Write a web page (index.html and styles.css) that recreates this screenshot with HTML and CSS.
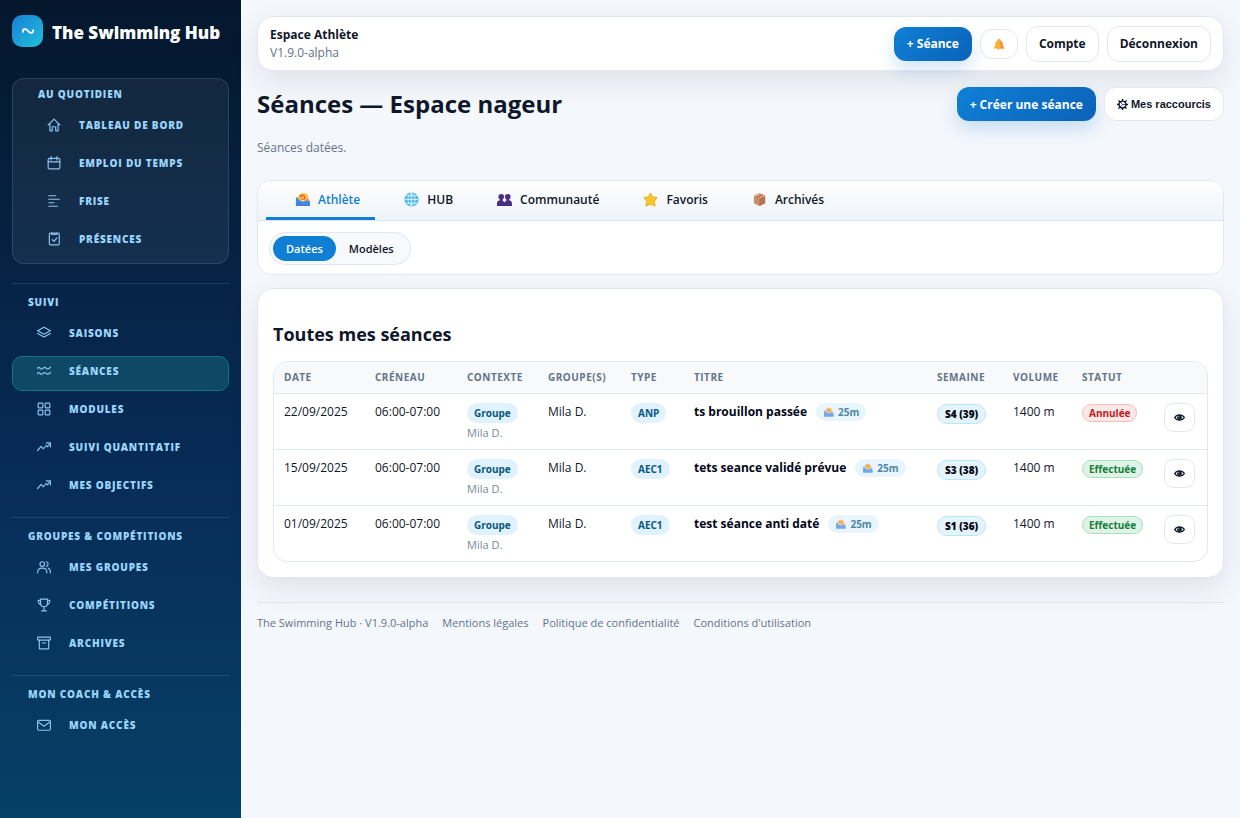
FILE: index.html
```html
<!DOCTYPE html>
<html lang="fr">
<head>
  <meta charset="UTF-8">
  <meta name="viewport" content="width=device-width, initial-scale=1.0">
  <title>Séances — The Swimming Hub</title>
  <link rel="stylesheet" href="styles.css">
</head>
<body>
  <svg class="sprite" aria-hidden="true">
    <symbol id="i-swim" viewBox="0 0 16 16">
      <path d="M3 9C2 4 5 1 9 1c4 0 6 3 5 8z" fill="#fbc02d"/>
      <path d="M5 4c2-2 6-1 6 2 0 2-2 3-4 2z" fill="#e8505b"/>
      <circle cx="8" cy="6" r="1.500" fill="#ffcc4d"/>
      <path d="M9 8l4-2 3 3-5 3z" fill="#f7a845"/>
      <path d="M1 6c1-1 2 1 3 2s3 2 5 2 3-1 4-1 2 1 3 1v5H1z" fill="#3b8ee8"/>
      <path d="M1 12c3-1 4 1 7 1s4-1 8-1v3H1z" fill="#4a7fe0"/>
    </symbol>
    <symbol id="i-trend" viewBox="0 0 24 24">
      <path d="M1 18l6-7 4 4 5-6 2 3 5-7M16 5h7v7"/>
    </symbol>
    <symbol id="i-eye" viewBox="0 0 16 12">
      <path d="M1 6c3-5 11-5 14 0-3 5-11 5-14 0z" fill="none" stroke="#0f172a" stroke-width="2"/>
      <circle cx="8" cy="6" r="3.500" fill="#0f172a"/>
      <circle cx="7" cy="5" r="0.800" fill="#fff"/>
    </symbol>
  </svg>

  <div class="layout">
    <aside class="sidebar">
      <div class="brand">
        <span class="brand-logo">
          <svg viewBox="0 0 16 10"><path d="M2 6c0-4 4-4 6-1s6 3 6-1"/></svg>
        </span>
        <span class="brand-name">The Swimming Hub</span>
      </div>

      <nav>
        <section class="nav-group nav-card">
          <h2>Au quotidien</h2>
          <a href="#"><svg viewBox="0 0 24 24"><path d="M2 12L12 2l10 10M5 10v12h4v-7h6v7h4V10"/></svg>Tableau de bord</a>
          <a href="#"><svg viewBox="0 0 24 24"><rect x="2" y="4" width="20" height="18" rx="2"/><path d="M7 1v6M17 1v6M2 10h20"/></svg>Emploi du temps</a>
          <a href="#"><svg viewBox="0 0 24 24"><path d="M3 3h12M3 9h18M3 15h9M3 21h15"/></svg>Frise</a>
          <a href="#"><svg viewBox="0 0 24 24"><rect x="4" y="2" width="17" height="20" rx="2"/><path d="M8 2v2h9V2M9 13l3 3 5-6"/></svg>Présences</a>
        </section>

        <section class="nav-group">
          <h2>Suivi</h2>
          <a href="#"><svg viewBox="0 0 24 24"><path d="M12 2L1 8l11 6 11-6zM1 13l11 6 11-6"/></svg>Saisons</a>
          <a href="#" class="active"><svg viewBox="0 0 24 24"><path d="M0 8c3-4 4-2 6 0s4-1 6-2 3 1 5 2 4 0 7-3M0 17c3-4 4-2 6 0s4-1 6-2 3 1 5 2 4 0 7-3"/></svg>Séances</a>
          <a href="#"><svg viewBox="0 0 24 24"><rect x="2" y="2" width="8" height="8" rx="1"/><rect x="14" y="2" width="8" height="8" rx="1"/><rect x="2" y="14" width="8" height="8" rx="1"/><rect x="14" y="14" width="8" height="8" rx="1"/></svg>Modules</a>
          <a href="#"><svg><use href="#i-trend"/></svg>Suivi quantitatif</a>
          <a href="#"><svg><use href="#i-trend"/></svg>Mes objectifs</a>
        </section>

        <section class="nav-group">
          <h2>Groupes &amp; compétitions</h2>
          <a href="#"><svg viewBox="0 0 24 24"><circle cx="9" cy="7" r="4"/><path d="M1 22c0-6 3-8 8-8s8 2 8 8M16 3c4 1 4 7 0 8M19 14c3 1 4 4 4 8"/></svg>Mes groupes</a>
          <a href="#"><svg viewBox="0 0 24 24"><path d="M6 2h12v7c0 8-12 8-12 0zM6 4H2c0 5 1 7 5 7M18 4h4c0 5-1 7-5 7M12 15v7M8 22h8"/></svg>Compétitions</a>
          <a href="#"><svg viewBox="0 0 24 24"><rect x="1" y="2" width="22" height="5" rx="1"/><path d="M4 7v15h16V7M9 12h6"/></svg>Archives</a>
        </section>

        <section class="nav-group">
          <h2>Mon coach &amp; accès</h2>
          <a href="#"><svg viewBox="0 0 24 24"><rect x="1" y="4" width="22" height="17" rx="2"/><path d="M2 7l10 7 10-7"/></svg>Mon accès</a>
        </section>
      </nav>
    </aside>

    <main class="main">
      <header class="topbar">
        <div class="topbar-title">
          <strong>Espace Athlète</strong>
          <span>V1.9.0-alpha</span>
        </div>
        <div class="actions">
          <button class="btn btn-primary">+ Séance</button>
          <button class="btn btn-bell" aria-label="Notifications">
            <svg viewBox="0 0 16 16"><path d="M8 1c1 0 2 1 2 2 3 2 3 5 3 8l2 2v1H1v-1l2-2c0-3 0-6 3-8 0-1 1-2 2-2z" fill="#fbb034"/><path d="M10 3c3 2 3 5 3 8l2 2v1h-5z" fill="#f58b3c"/><circle cx="7" cy="14" r="1.500" fill="#f7a531"/></svg>
          </button>
          <button class="btn">Compte</button>
          <button class="btn">Déconnexion</button>
        </div>
      </header>

      <div class="page-head">
        <h1>Séances — Espace nageur</h1>
        <div class="actions">
          <button class="btn btn-primary">+ Créer une séance</button>
          <button class="btn btn-shortcuts"><svg viewBox="0 0 16 16"><circle cx="8" cy="8" r="5"/><path d="M8 8h5M8 8L5 4M8 8l-3 4" stroke-width="1"/><path d="M8 0v3M8 13v3M0 8h3M13 8h3M2 2l3 3M11 11l3 3M2 14l3-3M11 5l3-3"/></svg>Mes raccourcis</button>
        </div>
      </div>
      <p class="subtitle">Séances datées.</p>

      <section class="tabs-card">
        <div class="tabs">
          <button class="tab active"><svg><use href="#i-swim"/></svg>Athlète</button>
          <button class="tab"><svg viewBox="0 0 16 16"><circle cx="8" cy="8" r="7.500" fill="#4fb8ee"/><path d="M8 1v14M1 8h14M2 4h12M2 12h12M8 1c-5 4-5 10 0 14M8 1c5 4 5 10 0 14" fill="none" stroke="#d5effc"/></svg>HUB</button>
          <button class="tab"><svg viewBox="0 0 16 16"><g fill="#4b2e83"><circle cx="4.500" cy="5" r="3"/><circle cx="11.500" cy="5" r="3"/><path d="M3 7h3v3H3zM10 7h3v3h-3zM0 15c0-4 0-5 2-6h4l2 2 2-2h4c2 1 2 2 2 6z"/></g></svg>Communauté</button>
          <button class="tab"><svg viewBox="0 0 16 16"><path d="M8 1l2 4 5 1-3 4 1 5-5-2-5 2 1-5-3-4 5-1z" fill="#fcc52c" stroke="#e5ad22" stroke-linejoin="round"/></svg>Favoris</button>
          <button class="tab"><svg viewBox="0 0 16 16"><path d="M8 1l6 3v8l-6 3-6-3V4z" fill="#c98d68"/><path d="M8 7l6-3v8l-6 3z" fill="#b47250"/><path d="M2 4l6-3 6 3-6 3z" fill="#dfa884"/><path d="M5 6l6-3" fill="none" stroke="#7d4934"/></svg>Archivés</button>
        </div>
        <div class="tabs-body">
          <div class="segment">
            <button class="active">Datées</button>
            <button>Modèles</button>
          </div>
        </div>
      </section>

      <section class="card">
        <h2>Toutes mes séances</h2>
        <div class="table-wrap">
          <table>
            <colgroup>
              <col class="c-date"><col class="c-slot"><col class="c-context"><col class="c-group"><col class="c-type">
              <col><col class="c-week"><col class="c-volume"><col class="c-status"><col class="c-action">
            </colgroup>
            <thead>
              <tr>
                <th>Date</th><th>Créneau</th><th>Contexte</th><th>Groupe(s)</th><th>Type</th>
                <th>Titre</th><th>Semaine</th><th>Volume</th><th>Statut</th><th></th>
              </tr>
            </thead>
            <tbody>
              <tr>
                <td>22/09/2025</td>
                <td>06:00-07:00</td>
                <td><span class="pill">Groupe</span><small>Mila D.</small></td>
                <td>Mila D.</td>
                <td><span class="pill">ANP</span></td>
                <td><strong>ts brouillon passée</strong><span class="pool"><svg><use href="#i-swim"/></svg>25m</span></td>
                <td><span class="week">S4 (39)</span></td>
                <td>1400 m</td>
                <td><span class="status cancelled">Annulée</span></td>
                <td><button class="view" aria-label="Voir"><svg><use href="#i-eye"/></svg></button></td>
              </tr>
              <tr>
                <td>15/09/2025</td>
                <td>06:00-07:00</td>
                <td><span class="pill">Groupe</span><small>Mila D.</small></td>
                <td>Mila D.</td>
                <td><span class="pill">AEC1</span></td>
                <td><strong>tets seance validé prévue</strong><span class="pool"><svg><use href="#i-swim"/></svg>25m</span></td>
                <td><span class="week">S3 (38)</span></td>
                <td>1400 m</td>
                <td><span class="status done">Effectuée</span></td>
                <td><button class="view" aria-label="Voir"><svg><use href="#i-eye"/></svg></button></td>
              </tr>
              <tr>
                <td>01/09/2025</td>
                <td>06:00-07:00</td>
                <td><span class="pill">Groupe</span><small>Mila D.</small></td>
                <td>Mila D.</td>
                <td><span class="pill">AEC1</span></td>
                <td><strong>test séance anti daté</strong><span class="pool"><svg><use href="#i-swim"/></svg>25m</span></td>
                <td><span class="week">S1 (36)</span></td>
                <td>1400 m</td>
                <td><span class="status done">Effectuée</span></td>
                <td><button class="view" aria-label="Voir"><svg><use href="#i-eye"/></svg></button></td>
              </tr>
            </tbody>
          </table>
        </div>
      </section>

      <footer class="footer">
        <span>The Swimming Hub · V1.9.0-alpha</span>
        <a href="#">Mentions légales</a>
        <a href="#">Politique de confidentialité</a>
        <a href="#">Conditions d'utilisation</a>
      </footer>
    </main>
  </div>
</body>
</html>
```
FILE: styles.css
```css
* {
  box-sizing: border-box;
}
body {
  margin: 0;
  font-family: "Open Sans", "Noto Sans", sans-serif;
  font-size: 12px;
  color: #0f172a;
  background: #f4f7fc;
}
h1, h2, p {
  margin: 0;
}
button {
  font-family: inherit;
  color: inherit;
  cursor: pointer;
}
a {
  color: inherit;
  text-decoration: none;
}
.sprite {
  display: none;
}
.layout {
  display: flex;
  min-height: 100vh;
}

/* Sidebar */
.sidebar {
  width: 241px;
  flex-shrink: 0;
  padding: 15px 12px;
  color: #9bd5fb;
  background: linear-gradient(180deg, #04172d 0%, #072c57 58%, #064066 100%);
}
.brand {
  display: flex;
  align-items: flex-end;
  gap: 9px;
  margin-bottom: 31px;
}
.brand-logo {
  display: flex;
  align-items: center;
  justify-content: center;
  width: 31px;
  height: 32px;
  border-radius: 10px;
  background: linear-gradient(135deg, #1680d8, #22bfd8);
}
.brand-logo svg {
  width: 14px;
  height: 10px;
  fill: none;
  stroke: #fff;
  stroke-width: 2;
  stroke-linecap: round;
}
.brand-name {
  font-size: 17px;
  line-height: 28px;
  font-weight: 800;
  color: #fff;
}
.nav-group {
  border-top: 1px solid rgba(148, 190, 230, 0.18);
  padding-top: 10px;
  margin-bottom: 12px;
}
.nav-card {
  padding: 7px 0 4px 9px;
  margin-bottom: 19px;
  border: 1px solid rgba(148, 190, 230, 0.18);
  border-radius: 12px;
  background: rgba(255, 255, 255, 0.06);
}
.nav-group h2 {
  padding-left: 16px;
  margin-bottom: 8px;
  font-size: 10px;
  line-height: 16px;
  font-weight: 800;
  letter-spacing: 0.08em;
  text-transform: uppercase;
}
.nav-group a {
  display: flex;
  align-items: center;
  gap: 18px;
  padding: 5px 0 10px 24px;
  margin-bottom: 3px;
  border: 1px solid transparent;
  border-radius: 10px;
  font-size: 10px;
  line-height: 18px;
  font-weight: 800;
  letter-spacing: 0.08em;
  text-transform: uppercase;
}
.nav-group a:last-child {
  margin-bottom: 0;
}
.nav-group a.active {
  background: #0f4866;
  border-color: #137287;
}
.nav-group svg {
  width: 14px;
  height: 14px;
  fill: none;
  stroke: #8fc2ee;
  stroke-width: 2;
  stroke-linecap: round;
  stroke-linejoin: round;
}

/* Header */
.main {
  flex: 1;
  min-width: 0;
  padding: 16px;
}
.topbar {
  display: flex;
  align-items: center;
  justify-content: space-between;
  padding: 8px 12px;
  border: 1px solid #e2e8f3;
  border-radius: 16px;
  background: #fff;
  box-shadow: 0 10px 30px rgba(15, 23, 42, 0.09);
}
.topbar-title {
  display: flex;
  flex-direction: column;
  padding-top: 1px;
  font-size: 12px;
  line-height: 18px;
}
.topbar-title span,
.subtitle {
  color: #64748b;
}
.actions {
  display: flex;
  align-items: center;
  gap: 8px;
}
.btn {
  height: 36px;
  padding: 0 12px;
  border: 1px solid #e2e8f0;
  border-radius: 12px;
  background: #fff;
  font-size: 12px;
  font-weight: 700;
}
.btn-primary {
  height: 34px;
  padding: 0 13px;
  border: none;
  color: #fff;
  background: linear-gradient(135deg, #0f80d5, #0a62b8);
  box-shadow: 0 8px 18px rgba(14, 120, 210, 0.2);
}
.btn-bell {
  display: flex;
  align-items: center;
  height: 30px;
}
.btn-bell svg {
  width: 12px;
  height: 14px;
}
.btn-shortcuts {
  display: flex;
  align-items: center;
  gap: 3px;
  height: 34px;
  font-family: "Liberation Sans", Arial, sans-serif;
  font-size: 11px;
}
.btn-shortcuts svg {
  width: 11px;
  height: 11px;
  fill: none;
  stroke: #0f172a;
  stroke-width: 2;
}
.page-head {
  display: flex;
  align-items: center;
  justify-content: space-between;
  margin-top: 16px;
}
.page-head h1 {
  font-size: 24px;
  line-height: 34px;
}
.subtitle {
  margin: 18px 0 23px;
  line-height: 18px;
}

/* Tabs */
.tabs-card {
  margin-bottom: 13px;
  border: 1px solid #e2e8f3;
  border-radius: 14px;
  background: #fff;
  overflow: hidden;
}
.tabs {
  display: flex;
  padding: 0 8px;
  border-bottom: 1px solid #dfe7f2;
  background: linear-gradient(180deg, #fff, #edf4fa);
}
.tab {
  display: flex;
  align-items: center;
  gap: 8px;
  height: 39px;
  padding: 1px 15px 0 29px;
  border: none;
  border-bottom: 3px solid transparent;
  background: none;
  font-size: 12px;
  font-weight: 600;
}
.tab.active {
  color: #0f7fd4;
  border-bottom-color: #0f7fd4;
}
.tab svg {
  width: 15px;
  height: 15px;
}
.tabs-body {
  padding: 11px 11px 9px;
}
.segment {
  display: inline-flex;
  padding: 3px;
  border: 1px solid #e2e8f0;
  border-radius: 16px;
  background: #f7f9fb;
  vertical-align: top;
}
.segment button {
  height: 25px;
  padding: 0 13px;
  border: none;
  border-radius: 13px;
  background: none;
  font-size: 11px;
  font-weight: 600;
}
.segment .active {
  color: #fff;
  background: #0f7fd4;
}

/* Sessions table */
.card {
  padding: 31px 15px 15px;
  border: 1px solid #e2e8f3;
  border-radius: 16px;
  background: #fff;
  box-shadow: 0 10px 30px rgba(15, 23, 42, 0.09);
}
.card h2 {
  margin-bottom: 13px;
  font-size: 18px;
  line-height: 28px;
}
.table-wrap {
  border: 1px solid #e2e8f3;
  border-radius: 14px;
  overflow: hidden;
}
table {
  width: 100%;
  table-layout: fixed;
  border-collapse: collapse;
}
.c-date {
  width: 91px;
}
.c-slot {
  width: 92px;
}
.c-context {
  width: 81px;
}
.c-group {
  width: 83px;
}
.c-type {
  width: 63px;
}
.c-week {
  width: 76px;
}
.c-volume {
  width: 69px;
}
.c-status {
  width: 82px;
}
.c-action {
  width: 53px;
}
th {
  height: 31px;
  padding: 0 10px;
  text-align: left;
  font-size: 10px;
  font-weight: 700;
  letter-spacing: 0.05em;
  text-transform: uppercase;
  white-space: nowrap;
  color: #64748b;
  background: #f7f9fb;
}
td {
  height: 56px;
  padding: 9px 0 0 10px;
  border-top: 1px solid #e2e8f3;
  vertical-align: top;
  font-size: 12px;
  line-height: 18px;
  white-space: nowrap;
}
td small {
  display: block;
  font-size: 11px;
  line-height: 18px;
  color: #7b8898;
}
td strong {
  color: #020617;
}
.pill, .pool, .week, .status {
  display: inline-block;
  border-radius: 10px;
  vertical-align: top;
}
.pill {
  padding: 1px 7px;
  margin-bottom: 1px;
  font-size: 10px;
  font-weight: 700;
  color: #075985;
  background: #e0f2fe;
}
.pool {
  padding: 0 7px;
  margin-left: 9px;
  font-size: 10px;
  font-weight: 700;
  color: #4e88a8;
  background: #e9f5fe;
}
.pool svg {
  width: 11px;
  height: 10px;
  margin-right: 4px;
  vertical-align: -1px;
  opacity: 0.7;
}
.week {
  padding: 0 7px;
  margin-top: 1px;
  border: 1px solid #bae6fd;
  font-size: 10px;
  font-weight: 800;
  color: #020617;
  background: #e3f4fb;
}
.status {
  padding: 0 6px;
  margin-top: 1px;
  border: 1px solid;
  font-size: 10px;
  line-height: 16px;
  font-weight: 700;
}
.status.cancelled {
  color: #b91c1c;
  background: #fde8e8;
  border-color: #f8bcbc;
}
.status.done {
  color: #15803d;
  background: #dff3e6;
  border-color: #aadfbd;
}
.view {
  display: flex;
  align-items: center;
  justify-content: center;
  width: 31px;
  height: 29px;
  border: 1px solid #e2e8f0;
  border-radius: 9px;
  background: #fff;
}
.view svg {
  width: 11px;
  height: 9px;
}

/* Footer */
.footer {
  display: flex;
  gap: 14px;
  margin-top: 24px;
  padding-top: 11px;
  border-top: 1px solid #dfe5ee;
  font-size: 11px;
  line-height: 18px;
  color: #64748b;
}
```
